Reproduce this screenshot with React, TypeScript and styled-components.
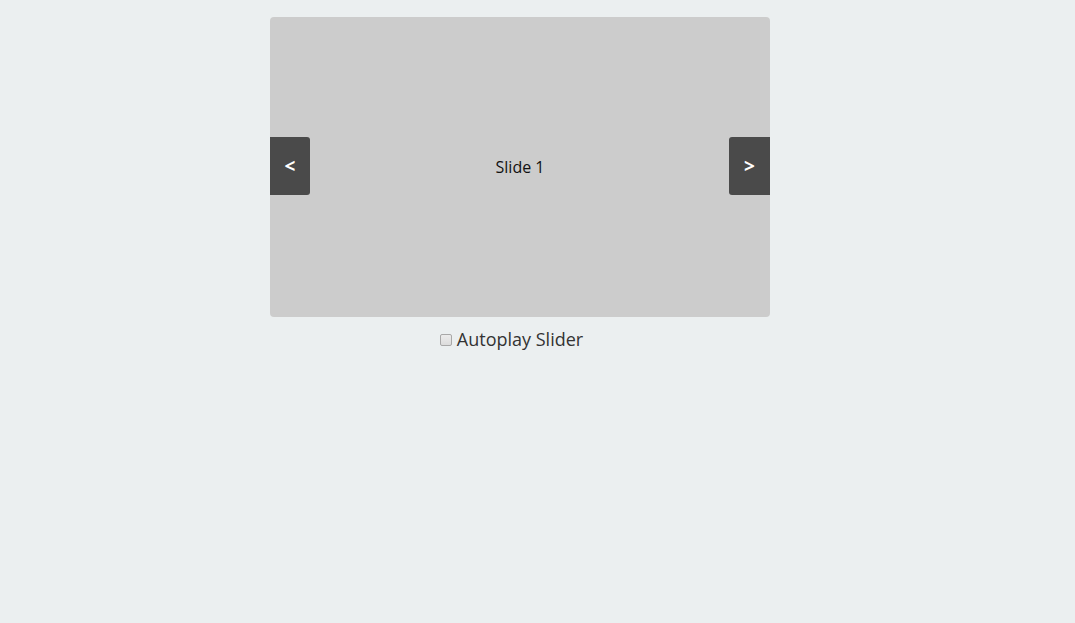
import React, { useEffect, useState } from "react";
import styled, { createGlobalStyle } from "styled-components";

const slides = ["Slide 1", "Slide 2", "Slide 3"];

const GlobalStyle = createGlobalStyle`
  html, body {
    margin: 0;
    padding: 0;
    background: #ebeff0;
    font-family: "Open Sans", "Liberation Sans", sans-serif;
    color: #222;
  }
`;

export default function App() {
  const [index, setIndex] = useState(0);
  const [autoplay, setAutoplay] = useState(false);

  useEffect(() => {
    if (!autoplay) return;
    const timer = setInterval(() => setIndex((i) => (i + 1) % slides.length), 2000);
    return () => clearInterval(timer);
  }, [autoplay]);

  const prev = () => setIndex((i) => (i - 1 + slides.length) % slides.length);
  const next = () => setIndex((i) => (i + 1) % slides.length);

  return (
    <Page>
      <GlobalStyle />
      <Wrapper>
        <Slider>
          <NavButton side="left" onClick={prev}>&lt;</NavButton>
          <Slide>{slides[index]}</Slide>
          <NavButton side="right" onClick={next}>&gt;</NavButton>
        </Slider>
        <AutoplayRow>
          <Checkbox
            type="checkbox"
            checked={autoplay}
            onChange={(e) => setAutoplay(e.target.checked)}
          />
          Autoplay Slider
        </AutoplayRow>
      </Wrapper>
    </Page>
  );
}

const Page = styled.div`
  min-height: 623px;
  padding-top: 17px;
  padding-left: 270px;
  box-sizing: border-box;
`;

const Wrapper = styled.div`
  width: 500px;
  display: flex;
  flex-direction: column;
`;

const Slider = styled.div`
  height: 300px;
  background: #cccccc;
  border-radius: 4px;
  display: flex;
  align-items: center;
  overflow: hidden;
`;

const Slide = styled.div`
  flex: 1;
  text-align: center;
  font-size: 16px;
  color: #111;
  padding-left: 1px;
`;

const NavButton = styled.button<{ side: "left" | "right" }>`
  width: ${(p) => (p.side === "left" ? "40px" : "41px")};
  height: 58px;
  margin-bottom: 2px;
  border: none;
  padding: 0;
  background: #4a4a4a;
  color: #fff;
  font-family: "Open Sans", "Liberation Sans", sans-serif;
  font-weight: 700;
  font-size: 19px;
  line-height: 58px;
  cursor: pointer;
  border-radius: ${(p) => (p.side === "left" ? "0 3px 3px 0" : "3px 0 0 3px")};
`;

const AutoplayRow = styled.label`
  display: flex;
  align-items: center;
  justify-content: center;
  padding-right: 17px;
  margin-top: 10px;
  font-size: 18px;
  color: #333;
  line-height: 25px;
`;

const Checkbox = styled.input`
  appearance: none;
  margin: 0 5px 0 0;
  width: 12px;
  height: 12px;
  border: 1px solid #a8a8a8;
  border-radius: 2px;
  background: linear-gradient(#ececec, #dcdcdc);
  box-sizing: border-box;
  cursor: pointer;

  &:checked {
    background: #4a4a4a;
    border-color: #4a4a4a;
  }
`;
